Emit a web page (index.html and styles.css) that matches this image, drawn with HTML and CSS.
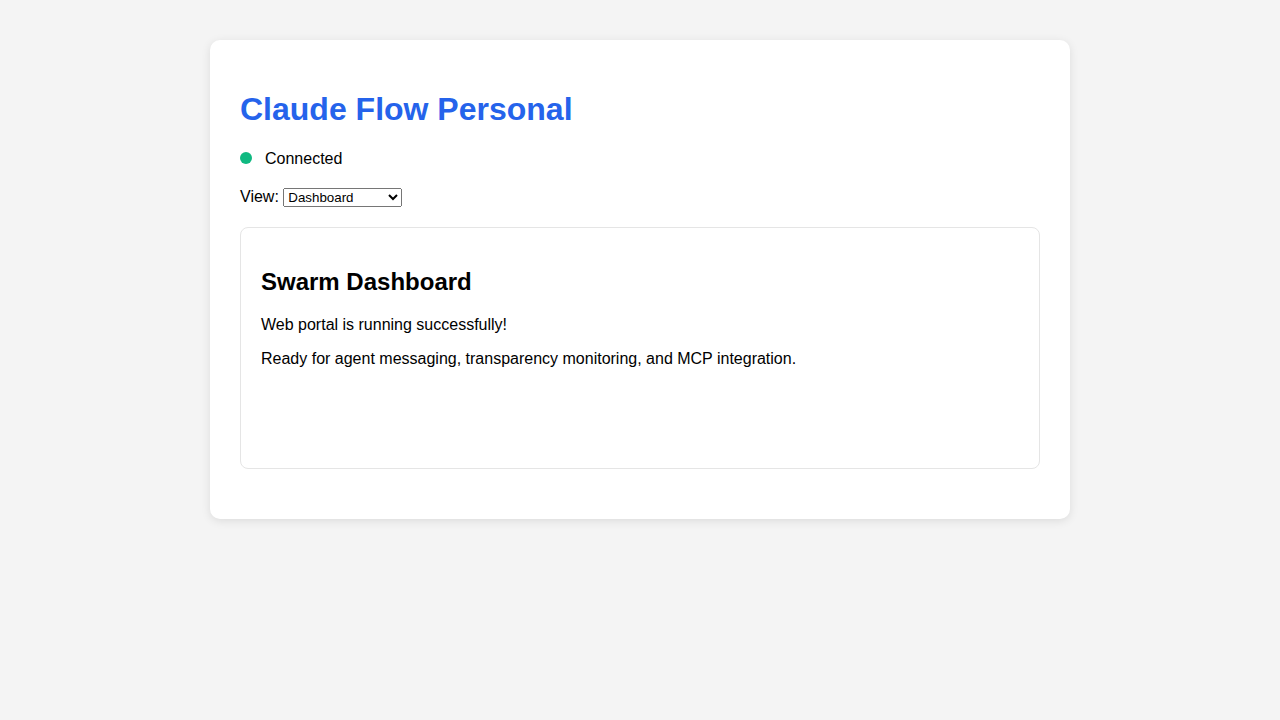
FILE: index.html
```html
<!DOCTYPE html>
<html lang="en">
<head>
<meta charset="utf-8">
<title>Claude Flow Personal</title>
<link rel="stylesheet" href="styles.css">
</head>
<body>
  <div class="container">
    <h1 class="title">Claude Flow Personal</h1>
    <div class="status">
      <span class="status-dot"></span>
      <span class="status-text">Connected</span>
    </div>
    <div class="view-row">
      <label for="view">View:</label> <select id="view" class="view-select">
        <option>Dashboard</option>
        <option>Agent Messages</option>
        <option>Transparency</option>
        <option>MCP Tools</option>
      </select>
    </div>
    <div class="panel">
      <h2 class="panel-title">Swarm Dashboard</h2>
      <p>Web portal is running successfully!</p>
      <p>Ready for agent messaging, transparency monitoring, and MCP integration.</p>
    </div>
  </div>
</body>
</html>
```

FILE: styles.css
```css
html, body {
  margin: 0;
  padding: 0;
}

body {
  background: #f4f4f4;
  font-family: "Liberation Sans", Arial, sans-serif;
  font-size: 16px;
  color: #000;
}

.container {
  max-width: 800px;
  margin: 40px auto;
  padding: 30px;
  background: #fff;
  border-radius: 10px;
  box-shadow: 0 2px 10px rgba(0, 0, 0, 0.1);
}

.title {
  font-size: 32px;
  font-weight: bold;
  color: #2563eb;
  margin: 0.67em 0;
}

.status {
  display: flex;
  align-items: center;
  margin-bottom: 20px;
}

.status-dot {
  width: 12px;
  height: 12px;
  border-radius: 50%;
  background: #10b981;
  margin-right: 13px;
  margin-bottom: 2px;
  flex-shrink: 0;
}

.view-row {
  margin-bottom: 20px;
}

.view-select {
  width: 119px;
  font-family: "Liberation Sans", Arial, sans-serif;
  font-size: 13.33px;
}

.panel {
  margin: 20px 0;
  padding: 20px;
  min-height: 200px;
  border: 1px solid #e5e5e5;
  border-radius: 8px;
}

.panel-title {
  font-size: 24px;
  font-weight: bold;
  margin: 0.83em 0;
}

.panel p {
  margin: 16px 0;
}
```
